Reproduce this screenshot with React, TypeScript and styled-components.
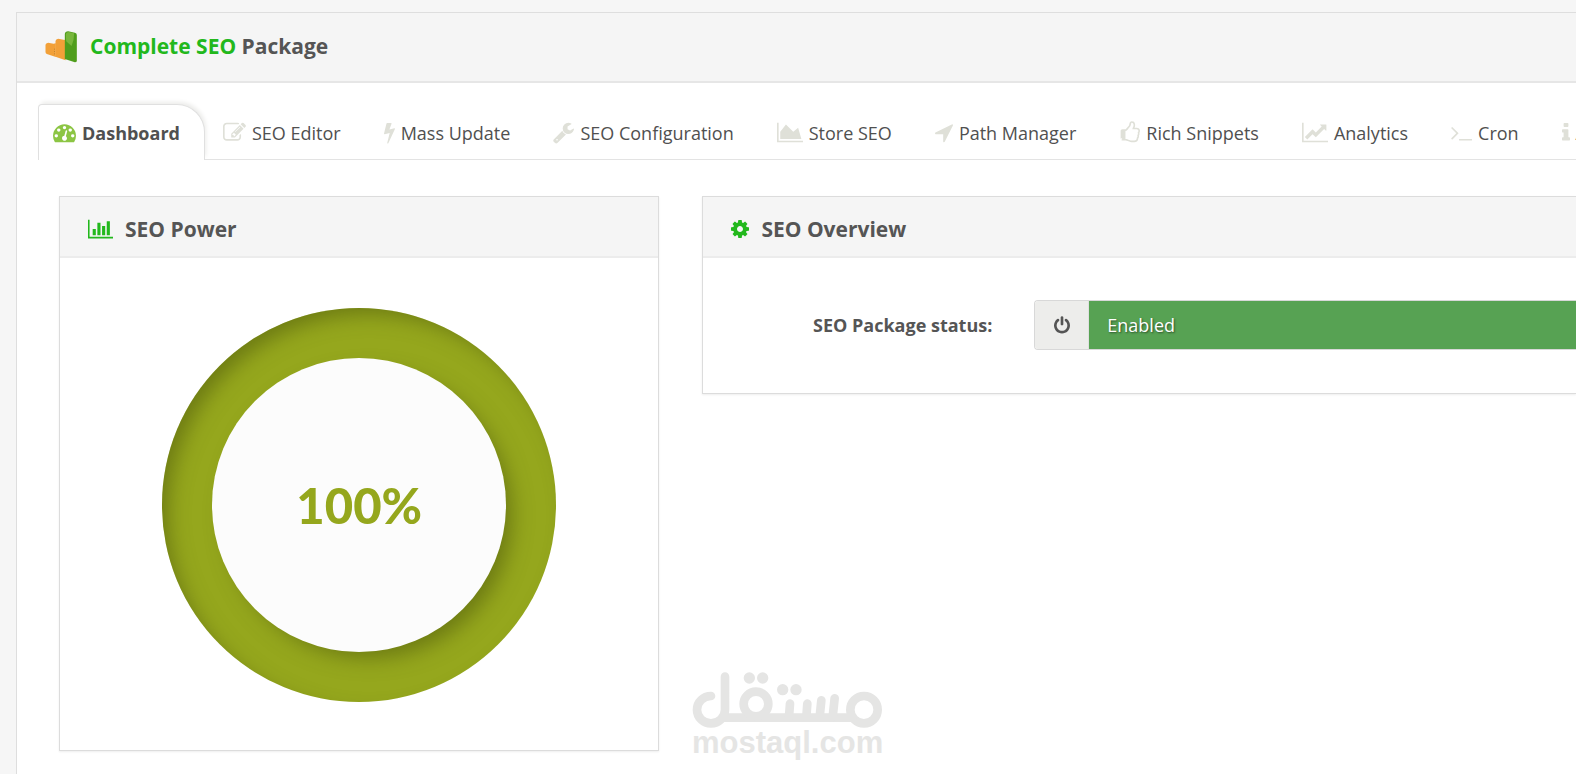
import React from "react";
import styled, { createGlobalStyle } from "styled-components";

const GlobalStyle = createGlobalStyle`
  *, *::before, *::after { box-sizing: border-box; }
  body {
    margin: 0;
    background: #f6f6f6;
    color: #555;
    font-family: "Open Sans", "Noto Sans", sans-serif;
    font-size: 18px;
    line-height: 28px;
  }
`;

/* Icon outlines share a 1792-unit em; each has its own left edge and advance width. */
type Glyph = { left: number; advance: number; d: string };

const glyphs: Record<string, Glyph> = {
  gauge: {
    left: 0,
    advance: 1792,
    d: "M384 1152q0-53-37.5-90.5t-90.5-37.5-90.5 37.5-37.5 90.5 37.5 90.5 90.5 37.5 90.5-37.5 37.5-90.5zm192-448q0-53-37.5-90.5t-90.5-37.5-90.5 37.5-37.5 90.5 37.5 90.5 90.5 37.5 90.5-37.5 37.5-90.5zm428 481l101-382q6-26-7.5-48.5t-38.5-29.5-48 6.5-30 39.5l-101 382q-60 5-107 43.5t-63 98.5q-20 77 20 146t117 89 146-20 89-117q16-60-6-117t-72-91zm660-33q0-53-37.5-90.5t-90.5-37.5-90.5 37.5-37.5 90.5 37.5 90.5 90.5 37.5 90.5-37.5 37.5-90.5zm-640-640q0-53-37.5-90.5t-90.5-37.5-90.5 37.5-37.5 90.5 37.5 90.5 90.5 37.5 90.5-37.5 37.5-90.5zm448 192q0-53-37.5-90.5t-90.5-37.5-90.5 37.5-37.5 90.5 37.5 90.5 90.5 37.5 90.5-37.5 37.5-90.5zm320 448q0 261-141 483-19 29-54 29h-1402q-35 0-54-29-141-221-141-483 0-182 71-348t191-286 286-191 348-71 348 71 286 191 191 286 71 348z",
  },
  edit: {
    left: 0,
    advance: 1792,
    d: "M888 1184l116-116-152-152-116 116v56h96v96h56zm440-720q-16-16-33 1l-350 350q-17 17-1 33t33-1l350-350q17-17 1-33zm80 594v190q0 119-84.5 203.5t-203.5 84.5h-832q-119 0-203.5-84.5t-84.5-203.5v-832q0-119 84.5-203.5t203.5-84.5h832q63 0 117 25 15 7 18 23 3 17-9 29l-49 49q-14 14-32 8-23-6-45-6h-832q-66 0-113 47t-47 113v832q0 66 47 113t113 47h832q66 0 113-47t47-113v-126q0-13 9-22l64-64q15-15 35-7t20 29zm-96-738l288 288-672 672h-288v-288zm444 132l-92 92-288-288 92-92q28-28 68-28t68 28l152 152q28 28 28 68t-28 68z",
  },
  bolt: {
    left: 448,
    advance: 896,
    d: "M1333 566q18 20 7 44l-540 1157q-13 25-42 25-4 0-14-2-17-5-25.5-19t-4.5-30l197-808-406 101q-4 1-12 1-18 0-31-11-18-15-13-39l201-825q4-14 16-23t28-9h328q19 0 32 12.5t13 29.5q0 8-5 18l-171 463 396-98q8-2 12-2 19 0 34 15z",
  },
  wrench: {
    left: 64,
    advance: 1664,
    d: "M448 1472q0-26-19-45t-45-19-45 19-19 45 19 45 45 19 45-19 19-45zm644-420l-682 682q-37 37-90 37-52 0-91-37l-106-108q-38-36-38-90 0-53 38-91l681-681q39 98 114.5 173.5t173.5 114.5zm634-435q0 39-23 106-47 134-164.5 217.5t-258.5 83.5q-185 0-316.5-131.5t-131.5-316.5 131.5-316.5 316.5-131.5q58 0 121.5 16.5t107.5 46.5q16 11 16 28t-16 28l-293 169v224l193 107q5-3 79-48.5t135.5-81 70.5-35.5q15 0 23.5 10t8.5 25z",
  },
  area: {
    left: 0,
    advance: 2048,
    d: "M2048 1536v128h-2048v-1536h128v1408h1920zm-384-1024l256 896h-1664v-576l448-576 576 576z",
  },
  arrow: {
    left: 192,
    advance: 1408,
    d: "M1593 349l-640 1280q-17 35-57 35-5 0-15-2-22-5-35.5-22.5t-13.5-39.5v-576h-576q-22 0-39.5-13.5t-22.5-35.5 4-42 29-30l1280-640q13-7 29-7 27 0 45 19 15 14 18.5 34.5t-6.5 39.5z",
  },
  thumb: {
    left: 0,
    advance: 1664,
    d: "M256 1408q0-26-19-45t-45-19-45 19-19 45 19 45 45 19 45-19 19-45zm1280-640q0-51-39-89.5t-89-38.5h-352q0-58 48-159.5t48-160.5q0-98-32-145t-128-47q-26 26-38 85t-30.5 125.5-59.5 109.5q-22 23-77 91-4 5-23 30t-31.5 41-34.5 42.5-40 44-38.5 35.5-40 27-35.5 9h-32v640h32q13 0 31.5 3t33 6.5 38 11 35 11.5 35.5 12.5 29 10.5q211 73 342 73h121q192 0 192-167 0-26-5-56 30-16 47.5-52.5t17.5-73.5-18-69q53-50 53-119 0-25-10-55.5t-25-47.5q32-1 53.5-47t21.5-81zm128-1q0 89-49 163 9 33 9 69 0 77-38 144 3 21 3 43 0 101-60 178 1 139-85 219.5t-227 80.5h-129q-96 0-189.5-22.5t-216.5-65.5q-116-40-138-40h-288q-53 0-90.5-37.5t-37.5-90.5v-640q0-53 37.5-90.5t90.5-37.5h274q36-24 137-155 58-75 107-128 24-25 35.5-85.5t30.5-126.5 62-108q39-37 90-37 84 0 151 32.5t102 101.5 35 186q0 93-48 192h176q104 0 180 76t76 179z",
  },
  line: {
    left: 0,
    advance: 2048,
    d: "M2048 1536v128h-2048v-1536h128v1408h1920zm-128-1248v435q0 21-19.5 29.5t-35.5-7.5l-121-121-633 633q-10 10-23 10t-23-10l-233-233-416 416-192-192 585-585q10-10 23-10t23 10l233 233 464-464-121-121q-16-16-7.5-35.5t29.5-19.5h435q14 0 23 9t9 23z",
  },
  terminal: {
    left: 64,
    advance: 1664,
    d: "M649 983l-466 466q-10 10-23 10t-23-10l-50-50q-10-10-10-23t10-23l393-393-393-393q-10-10-10-23t10-23l50-50q10-10 23-10t23 10l466 466q10 10 10 23t-10 23zm1079 457v64q0 14-9 23t-23 9h-960q-14 0-23-9t-9-23v-64q0-14 9-23t23-9h960q14 0 23 9t9 23z",
  },
  info: {
    left: 576,
    advance: 640,
    d: "M1216 1344v128q0 26-19 45t-45 19h-512q-26 0-45-19t-19-45v-128q0-26 19-45t45-19h64v-384h-64q-26 0-45-19t-19-45v-128q0-26 19-45t45-19h384q26 0 45 19t19 45v576h64q26 0 45 19t19 45zm-128-1152v192q0 26-19 45t-45 19h-256q-26 0-45-19t-19-45v-192q0-26 19-45t45-19h256q26 0 45 19t19 45z",
  },
  bars: {
    left: 0,
    advance: 2048,
    d: "M640 896v512h-256v-512h256zm384-512v1024h-256v-1024h256zm1024 1152v128h-2048v-1536h128v1408h1920zm-640-896v768h-256v-768h256zm384-384v1152h-256v-1152h256z",
  },
  cog: {
    left: 128,
    advance: 1536,
    d: "M1152 896q0-106-75-181t-181-75-181 75-75 181 75 181 181 75 181-75 75-181zm512-109v222q0 12-8 23t-20 13l-185 28q-19 54-39 91 35 50 107 138 10 12 10 25t-9 23q-27 37-99 108t-94 71q-12 0-26-9l-138-108q-44 23-91 38-16 136-29 186-7 28-36 28h-222q-14 0-24.5-8.5t-11.5-21.5l-28-184q-49-16-90-37l-141 107q-10 9-25 9-14 0-25-11-126-114-165-168-7-10-7-23 0-12 8-23 15-21 51-66.5t54-70.5q-27-50-41-99l-183-27q-13-2-21-12.5t-8-23.5v-222q0-12 8-23t19-13l186-28q14-46 39-92-40-57-107-138-10-12-10-24 0-10 9-23 26-36 98.5-107.5t94.5-71.5q13 0 26 10l138 107q44-23 91-38 16-136 29-186 7-28 36-28h222q14 0 24.5 8.5t11.5 21.5l28 184q49 16 90 37l142-107q9-9 24-9 13 0 25 10 129 119 165 170 7 8 7 22 0 12-8 23-15 21-51 66.5t-54 70.5q26 50 41 98l183 28q13 2 21 12.5t8 23.5z",
  },
  power: {
    left: 128,
    advance: 1536,
    d: "M1664 896q0 156-61 298t-164 245-245 164-298 61-298-61-245-164-164-245-61-298q0-182 80.5-343t226.5-270q43-32 95.5-25t83.5 50q32 42 24.5 94.5t-49.5 84.5q-98 74-151.5 181t-53.5 228q0 104 40.5 198.5t109.5 163.5 163.5 109.5 198.5 40.5 198.5-40.5 163.5-109.5 109.5-163.5 40.5-198.5q0-121-53.5-228t-151.5-181q-42-32-49.5-84.5t24.5-94.5q31-43 84-50t95 25q146 109 226.5 270t80.5 343zm-640-768v640q0 52-38 90t-90 38-90-38-38-90v-640q0-52 38-90t90-38 90 38 38 90z",
  },
};

const IconSvg = styled.svg`
  flex: none;
  display: block;
  fill: currentColor;
  overflow: visible;
`;

function Icon({ name, size = 23 }: { name: string; size?: number }) {
  const g = glyphs[name];
  return (
    <IconSvg
      width={Math.floor((g.advance / 1792) * size)}
      height={size}
      viewBox={`${g.left} 0 ${g.advance} 1792`}
      aria-hidden="true"
    >
      <path d={g.d} />
    </IconSvg>
  );
}

const Page = styled.div`
  display: flex;
  min-height: 100vh;
  padding: 12px 0 0 16px;
  overflow-x: clip;
`;

const Card = styled.main`
  flex: 1;
  min-width: 0;
  border: 1px solid #dedede;
  border-width: 1px 0 0 1px;
  background: #fff;
`;

const CardHeader = styled.header`
  display: flex;
  align-items: center;
  gap: 12px;
  height: 70px;
  padding: 0 28px;
  border-bottom: 2px solid #e6e6e6;
  background: #f5f5f5;
`;

const Title = styled.h1`
  margin: 0;
  padding-bottom: 2px;
  font-size: 21px;
  font-weight: 700;
`;

const Accent = styled.span`
  color: #22b81c;
`;

const TabList = styled.nav`
  display: flex;
  height: 56px;
  margin: 21px 0 0 21px;
  border-bottom: 1px solid #e3e3e3;
  white-space: nowrap;
`;

const Tab = styled.a<{ $active?: boolean }>`
  flex: none;
  display: flex;
  align-items: center;
  gap: 6px;
  height: 56px;
  margin-right: 3px;
  padding: 0 24px 0 14px;
  border: 1px solid ${(p) => (p.$active ? "#e0e0e0" : "transparent")};
  border-bottom: 0;
  border-radius: 4px 28px 0 0;
  background: ${(p) => (p.$active ? "#fff" : "transparent")};
  box-shadow: ${(p) => (p.$active ? "2px -3px 4px -1px #ececea" : "none")};
  color: #505050;
  font-weight: ${(p) => (p.$active ? 700 : 400)};
  text-decoration: none;

  svg {
    color: ${(p) => (p.$active ? "#8cc544" : "#dfe0d8")};
  }
`;

const Columns = styled.div`
  display: grid;
  grid-template-columns: 600fr 873fr;
  align-items: start;
  gap: 43px;
  padding: 36px 0 22px 42px;
`;

const Panel = styled.section<{ $bleed?: boolean }>`
  min-width: 0;
  border: 1px solid #dcdcdc;
  border-right-width: ${(p) => (p.$bleed ? 0 : 1)}px;
  box-shadow: 0 1px 2px #eee;
`;

const PanelHeader = styled.header`
  display: flex;
  align-items: center;
  gap: 12px;
  height: 61px;
  padding: 4px 28px 0;
  border-bottom: 2px solid #ececec;
  background: #f5f5f5;

  svg {
    color: #22b81c;
  }
`;

const PanelTitle = styled.h2`
  margin: 0;
  font-size: 21px;
  font-weight: 700;
`;

const GaugeArea = styled.div`
  display: flex;
  justify-content: center;
  padding: 50px 0 48px;
`;

const Ring = styled.div`
  display: grid;
  place-items: center;
  width: 394px;
  height: 394px;
  border-radius: 50%;
  background: #95a71d;
  box-shadow: inset 10px 10px 20px -4px rgba(70, 80, 10, 0.5);
`;

const Hole = styled.div`
  display: grid;
  place-items: center;
  width: 294px;
  height: 294px;
  border-radius: 50%;
  background: #fcfcfc;
  box-shadow: 10px 10px 20px -4px rgba(70, 80, 10, 0.5);
  color: #95a71d;
  font-family: Lato, sans-serif;
  font-size: 49px;
  font-weight: 900;
  line-height: 60px;
`;

const StatusRow = styled.div`
  display: grid;
  grid-template-columns: 8fr 15fr;
  align-items: center;
  gap: 42px;
  padding: 42px 0 43px;
`;

const StatusLabel = styled.label`
  font-weight: 700;
  text-align: right;
`;

const SelectGroup = styled.div`
  display: flex;
  height: 50px;
  border: 1px solid #d8d8d8;
  border-right: 0;
  border-radius: 4px 0 0 4px;
  overflow: hidden;
`;

const Addon = styled.span`
  flex: none;
  display: grid;
  place-items: center;
  width: 54px;
  border-right: 1px solid #e0e0e0;
  background: #ededeb;
  color: #555;
`;

const StatusSelect = styled.select`
  flex: 1;
  min-width: 0;
  padding: 0 18px;
  border: 0;
  border-radius: 0;
  appearance: none;
  background: #57a253;
  color: #fff;
  font: inherit;
  text-shadow: 1px 1px 2px rgba(0, 0, 0, 0.5);
`;

const Watermark = styled.div`
  position: absolute;
  top: 671px;
  left: 692px;
  color: #e5e5e4;
  font-family: "Liberation Sans", Arial, sans-serif;
  font-size: 31px;
  font-weight: 700;
  line-height: 30px;

  svg {
    display: block;
  }
`;

function BrandMark() {
  return (
    <svg width="33" height="32" viewBox="-1 -1 98 96" aria-hidden="true">
      <path d="M0 40Q1 35 8 34L24 37L31 36V77L4 68Q0 66 0 62Z" fill="#f2a038" />
      <path d="M30 29Q31 23 38 22L54 25L60 26V87L30 76Z" fill="#f2a038" />
      <path d="M58 8Q59 0 68 0L88 4Q94 5 94 11V88Q94 93 88 93L58 83Z" fill="#4f9d1c" />
      <path d="M61 8Q62 2 70 2L86 6Q86 28 78 44L62 30Z" fill="#78b63c" />
      <path d="M27 52V72" stroke="#a9762c" strokeWidth="2" strokeDasharray="3 4" />
    </svg>
  );
}

function WatermarkLogo() {
  return (
    <svg
      width="191"
      height="57"
      viewBox="96 62 573 171"
      role="img"
      aria-label="مستقل"
      fill="none"
      stroke="currentColor"
      strokeWidth="26"
      strokeLinecap="round"
    >
      <circle cx="612" cy="178" r="41" />
      <path d="M190 202H576" />
      <path d="M524 144L518 200M484 150L479 200M442 160L439 200M390 160L387 200" />
      <circle cx="288" cy="161" r="37" />
      <path d="M195 79V178A42 41 0 1 1 153 137" />
      <g fill="currentColor" stroke="none">
        <circle cx="368" cy="118" r="17" />
        <circle cx="408" cy="118" r="17" />
        <circle cx="268" cy="83" r="17" />
        <circle cx="308" cy="83" r="17" />
      </g>
    </svg>
  );
}

const tabs = [
  { icon: "gauge", label: "Dashboard" },
  { icon: "edit", label: "SEO Editor" },
  { icon: "bolt", label: "Mass Update" },
  { icon: "wrench", label: "SEO Configuration" },
  { icon: "area", label: "Store SEO" },
  { icon: "arrow", label: "Path Manager" },
  { icon: "thumb", label: "Rich Snippets" },
  { icon: "line", label: "Analytics" },
  { icon: "terminal", label: "Cron" },
  { icon: "info", label: "About" },
];

export default function App() {
  return (
    <>
      <GlobalStyle />
      <Page>
        <Card>
          <CardHeader>
            <BrandMark />
            <Title>
              <Accent>Complete SEO</Accent> Package
            </Title>
          </CardHeader>
          <TabList>
            {tabs.map((tab, i) => (
              <Tab
                key={tab.label}
                href="#"
                $active={i === 0}
                aria-current={i === 0 ? "page" : undefined}
              >
                <Icon name={tab.icon} />
                {tab.label}
              </Tab>
            ))}
          </TabList>
          <Columns>
            <Panel>
              <PanelHeader>
                <Icon name="bars" size={22} />
                <PanelTitle>SEO Power</PanelTitle>
              </PanelHeader>
              <GaugeArea>
                <Ring>
                  <Hole>100%</Hole>
                </Ring>
              </GaugeArea>
            </Panel>
            <Panel $bleed>
              <PanelHeader>
                <Icon name="cog" size={22} />
                <PanelTitle>SEO Overview</PanelTitle>
              </PanelHeader>
              <StatusRow>
                <StatusLabel htmlFor="status">SEO Package status:</StatusLabel>
                <SelectGroup>
                  <Addon>
                    <Icon name="power" size={19} />
                  </Addon>
                  <StatusSelect id="status" defaultValue="on">
                    <option value="on">Enabled</option>
                    <option value="off">Disabled</option>
                  </StatusSelect>
                </SelectGroup>
              </StatusRow>
            </Panel>
          </Columns>
        </Card>
        <Watermark>
          <WatermarkLogo />
          mostaql.com
        </Watermark>
      </Page>
    </>
  );
}
